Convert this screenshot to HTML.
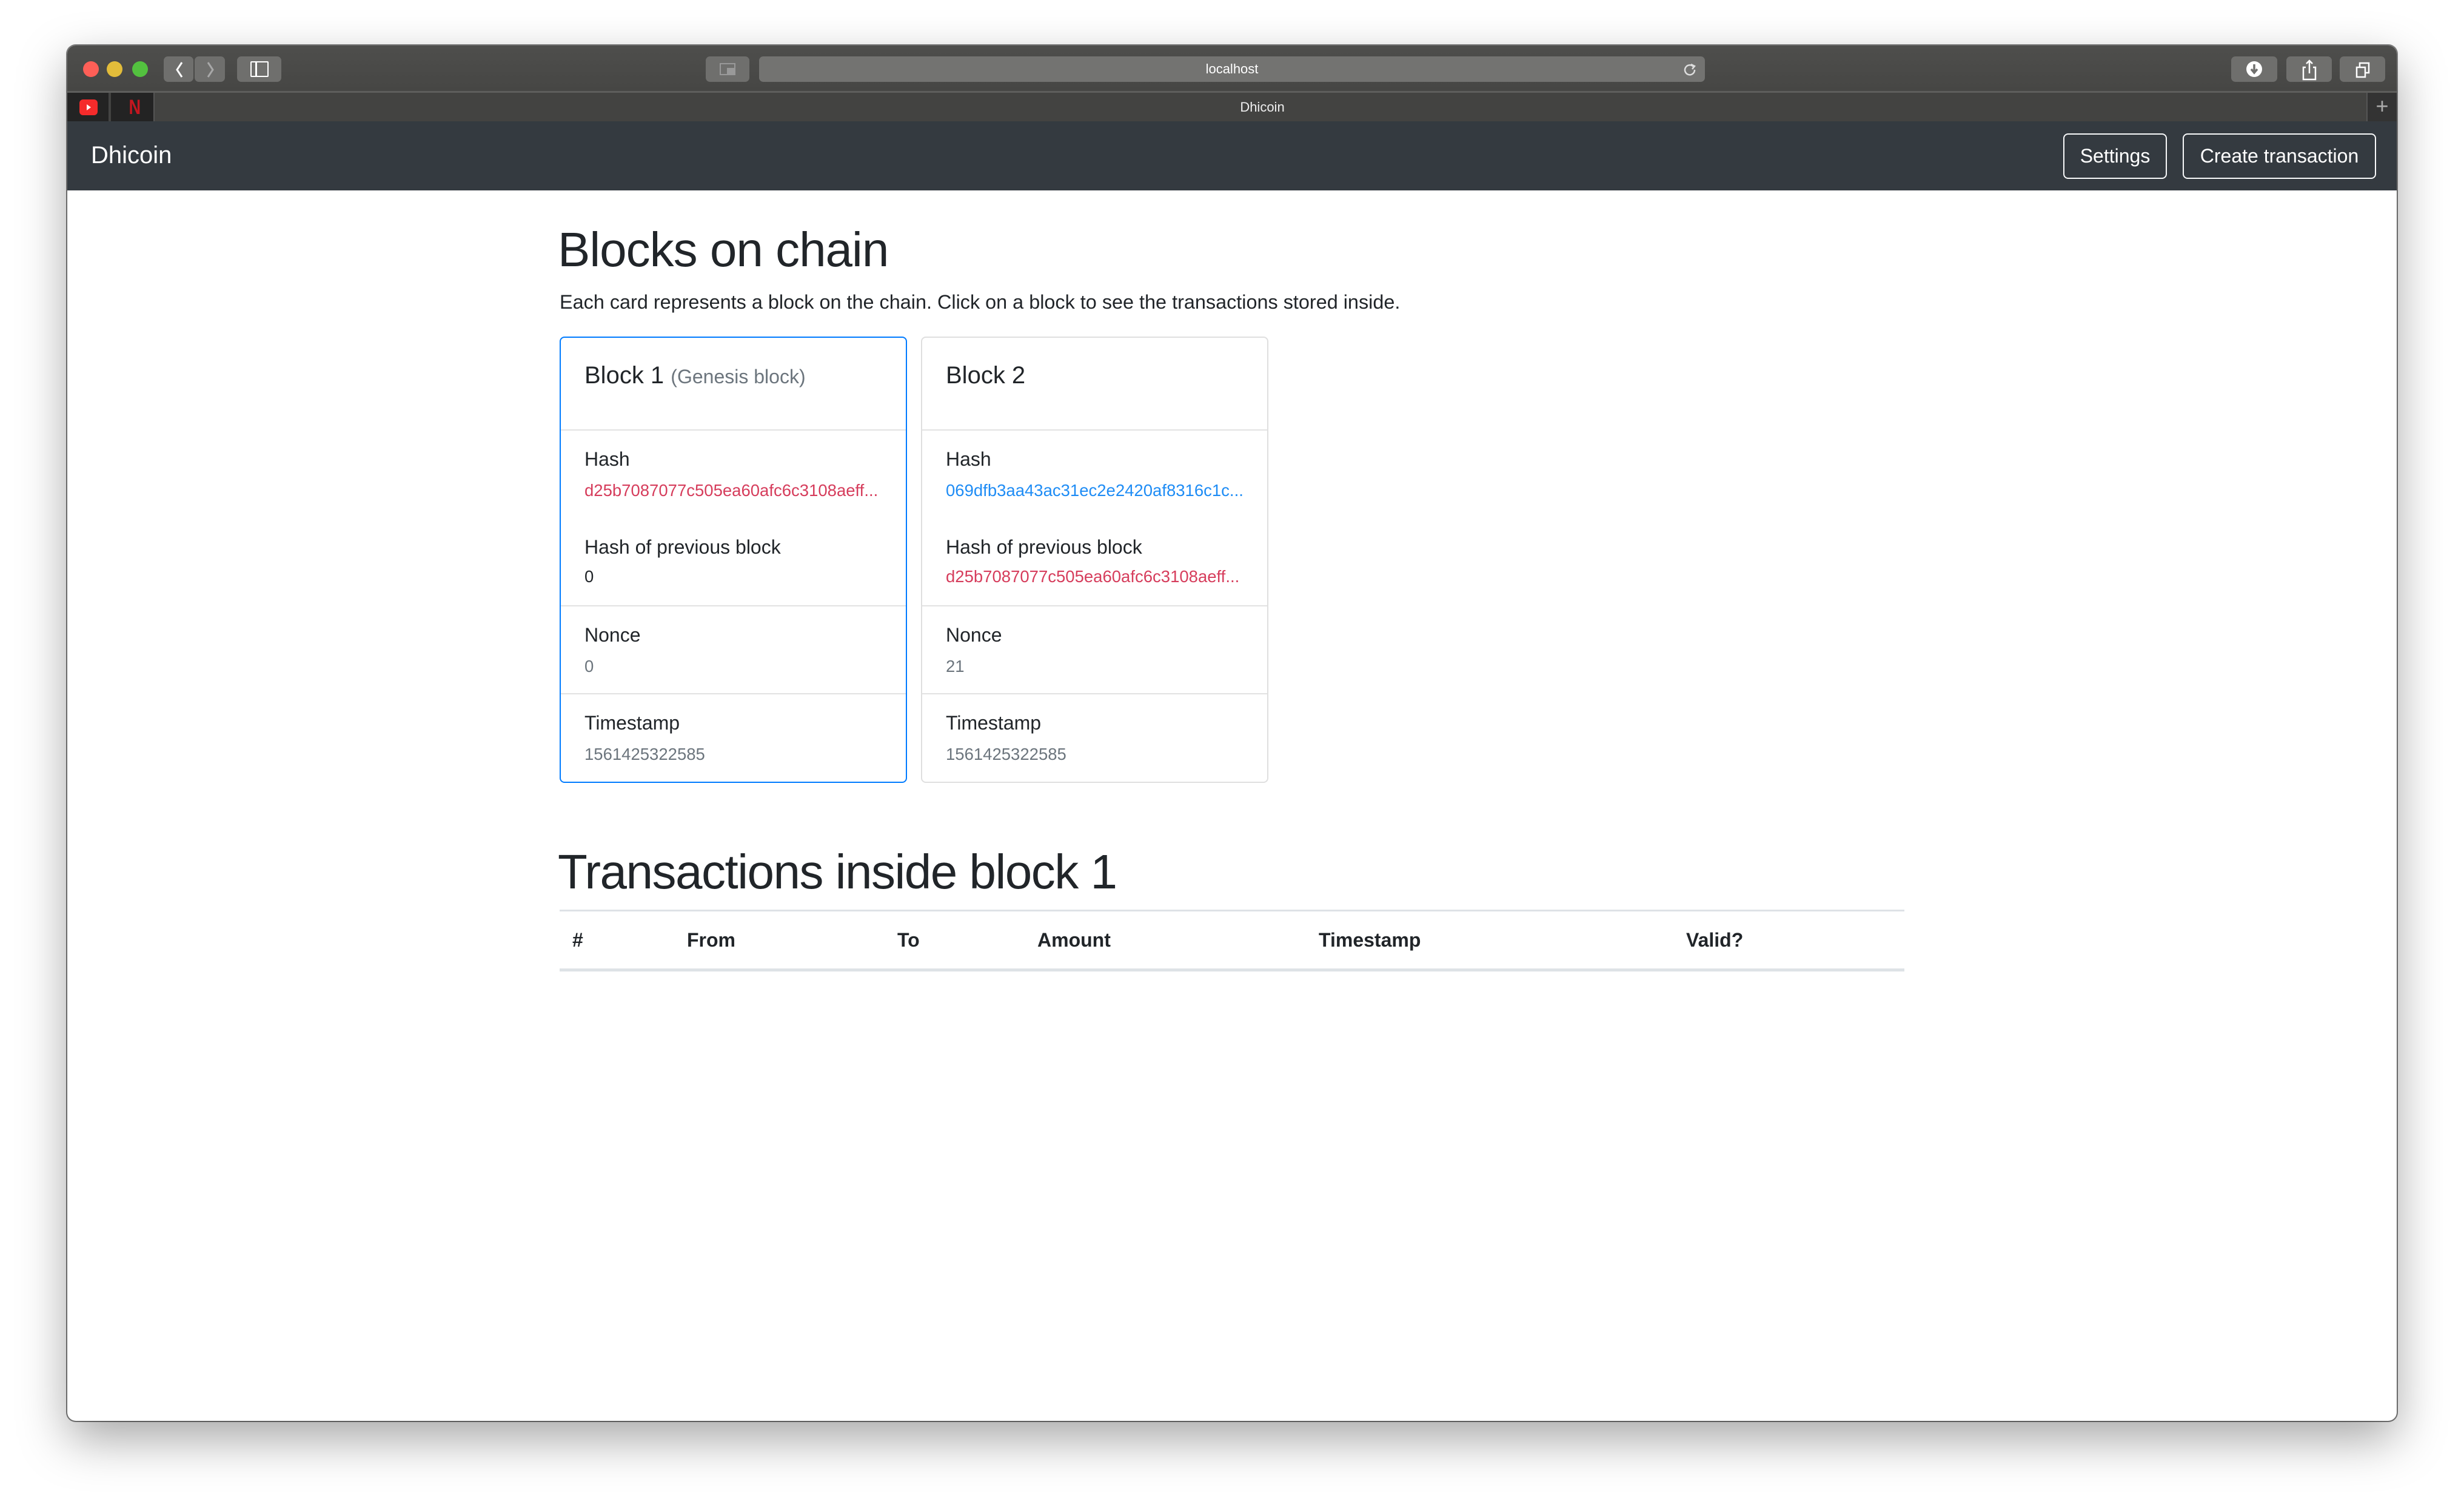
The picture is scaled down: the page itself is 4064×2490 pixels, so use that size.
<!DOCTYPE html>
<html><head><meta charset="utf-8"><style>
*{margin:0;padding:0;box-sizing:border-box}
html,body{width:4064px;height:2490px;overflow:hidden;background:#fff;font-family:"Liberation Sans",sans-serif;color:#212529}
.a{position:absolute}
.win{position:absolute;left:111px;top:75px;width:3842px;height:2268px;border-radius:14px;overflow:hidden;box-shadow:0 30px 80px rgba(0,0,0,.35),0 0 0 2px rgba(0,0,0,.5)}
.tb{position:absolute;left:0;top:0;width:100%;height:75px;background:linear-gradient(#4e4e4c,#464644)}
.tabs{position:absolute;left:0;top:75px;width:100%;height:125px;}
.btn{position:absolute;top:18px;height:42px;background:#6f6f6d;border-radius:7px}
.dot{position:absolute;top:18px;width:26px;height:26px;border-radius:50%}
.nav{position:absolute;left:0;top:125px;width:100%;height:114px;background:#343a40}
.nb{position:absolute;top:20px;height:75px;border:2px solid #f8f9fa;border-radius:8px;color:#fff;font-size:32px;line-height:71px;text-align:center}
.card{position:absolute;top:555px;width:573px;height:736px;border:2px solid #dfdfdf;border-radius:8px}
.t{position:absolute;left:39px;white-space:nowrap}
.lbl{font-size:32px;line-height:40px}
.val{font-size:27.5px;line-height:32px;color:#6c757d}
.hr{position:absolute;left:0;width:100%;height:2px;background:#e2e2e2}
.th{position:absolute;top:1530px;font-size:32px;font-weight:bold;line-height:40px}
</style></head><body>
<div class="win">
 <div class="tb">
  <div class="dot" style="left:26px;top:26px;background:#fe5f57"></div>
  <div class="dot" style="left:65px;top:26px;background:#e2bc3a"></div>
  <div class="dot" style="left:107px;top:26px;background:#53c13f"></div>
  <div class="btn" style="left:159px;width:49px"></div>
  <div class="btn" style="left:210px;width:50px"></div>
  <svg class="a" style="left:175px;top:26px" width="20" height="28"><path d="M14 2 L6 14 L14 26" stroke="#fff" stroke-width="3" fill="none"/></svg>
  <svg class="a" style="left:226px;top:26px" width="20" height="28"><path d="M6 2 L14 14 L6 26" stroke="#a8a8a8" stroke-width="3" fill="none"/></svg>
  <div class="btn" style="left:280px;width:73px"></div>
  <div class="a" style="left:302px;top:26px;width:30px;height:26px;border:2.5px solid #fff;border-radius:2px"><div class="a" style="left:6px;top:0;width:2.5px;height:22px;background:#fff"></div></div>
  <div class="btn" style="left:1053px;width:72px"></div>
  <div class="a" style="left:1076px;top:29px;width:26px;height:20px;border:2px solid #999"><div class="a" style="right:-2px;bottom:-2px;width:14px;height:12px;background:#999"></div></div>
  <div class="btn" style="left:1141px;width:1560px;background:#737371"></div>
  <div class="a" style="left:1141px;top:18px;width:1560px;line-height:42px;text-align:center;color:#fff;font-size:22px">localhost</div>
  <svg class="a" style="left:2664px;top:27px" width="24" height="24"><path d="M18 8 A8 8 0 1 0 20 13" stroke="#ddd" stroke-width="2.5" fill="none"/><path d="M14 4 L20 7 L16 12" stroke="#ddd" stroke-width="2.5" fill="none"/></svg>
  <div class="btn" style="left:3569px;width:76px"></div>
  <div class="a" style="left:3594px;top:26px;width:26px;height:26px;border-radius:50%;background:#fff"></div>
  <svg class="a" style="left:3594px;top:26px" width="26" height="26"><path d="M13 5 V18 M8 13 L13 19 L18 13" stroke="#6f6f6d" stroke-width="3.5" fill="none"/></svg>
  <div class="btn" style="left:3660px;width:75px"></div>
  <svg class="a" style="left:3685px;top:22px" width="26" height="36"><path d="M7 14 H3 V34 H23 V14 H19 M13 24 V3 M8 8 L13 3 L18 8" stroke="#fff" stroke-width="2.5" fill="none"/></svg>
  <div class="btn" style="left:3748px;width:75px"></div>
  <svg class="a" style="left:3773px;top:26px" width="26" height="28"><path d="M3 10 H17 V26 H3 Z M8 10 V3 H23 V19 H17" stroke="#fff" stroke-width="2.5" fill="none"/></svg>
 </div>
 <div class="tabs">
  <div class="a" style="left:0;top:0;width:100%;height:3px;background:#5e5e5c"></div>
  <div class="a" style="left:0;top:3px;width:100%;height:47px;background:#434341"></div>
  <div class="a" style="left:0;top:3px;width:70px;height:47px;background:#232323;border-right:2px solid #444"></div>
  <div class="a" style="left:20px;top:14px;width:30px;height:26px;border-radius:6px;background:#f52b2b"></div>
  <div class="a" style="left:32px;top:22px;width:0;height:0;border-left:7px solid #fff;border-top:5px solid transparent;border-bottom:5px solid transparent"></div>
  <div class="a" style="left:72px;top:3px;width:72px;height:47px;background:#232323;border-right:2px solid #555"></div>
  <div class="a" style="left:99px;top:8px;color:#c5161f;font-weight:bold;font-size:34px;line-height:38px;transform:scaleX(.8)">N</div>
  <div class="a" style="left:0;top:3px;width:100%;line-height:47px;text-align:center;color:#eee;font-size:22px;padding-left:100px">Dhicoin</div>
  <div class="a" style="left:3792px;top:3px;width:50px;height:47px;background:#333;border-left:2px solid #555;color:#aaa;font-size:36px;line-height:44px;text-align:center">+</div>
  <div class="a" style="left:0;top:50px;width:100%;height:2px;background:#111"></div>
 </div>
 <div class="nav">
  <div class="a" style="left:39px;top:30px;color:#fff;font-size:40px;line-height:52px">Dhicoin</div>
  <div class="nb" style="left:3292px;width:171px">Settings</div>
  <div class="nb" style="left:3489px;width:319px">Create transaction</div>
 </div>
</div>

<div class="a" style="left:920px;top:364px;font-size:80px;line-height:96px;font-weight:500;letter-spacing:-1px">Blocks on chain</div>
<div class="a" style="left:923px;top:478px;font-size:32.4px;line-height:40px">Each card represents a block on the chain. Click on a block to see the transactions stored inside.</div>

<div class="card" style="left:923px;border-color:#007bff">
 <div class="t" style="top:34px;font-size:40px;line-height:56px">Block 1 <span style="font-size:32px;color:#6c757d">(Genesis block)</span></div>
 <div class="hr" style="top:151px"></div>
 <div class="t lbl" style="top:180px">Hash</div>
 <div class="t val" style="top:236px;color:#d63d5c">d25b7087077c505ea60afc6c3108aeff...</div>
 <div class="t lbl" style="top:325px">Hash of previous block</div>
 <div class="t val" style="top:378px;color:#212529">0</div>
 <div class="hr" style="top:441px"></div>
 <div class="t lbl" style="top:470px">Nonce</div>
 <div class="t val" style="top:526px">0</div>
 <div class="hr" style="top:586px"></div>
 <div class="t lbl" style="top:615px">Timestamp</div>
 <div class="t val" style="top:671px">1561425322585</div>
</div>

<div class="card" style="left:1519px">
 <div class="t" style="top:34px;font-size:40px;line-height:56px">Block 2</div>
 <div class="hr" style="top:151px"></div>
 <div class="t lbl" style="top:180px">Hash</div>
 <div class="t val" style="top:236px;color:#1e8cf5">069dfb3aa43ac31ec2e2420af8316c1c...</div>
 <div class="t lbl" style="top:325px">Hash of previous block</div>
 <div class="t val" style="top:378px;color:#d63d5c">d25b7087077c505ea60afc6c3108aeff...</div>
 <div class="hr" style="top:441px"></div>
 <div class="t lbl" style="top:470px">Nonce</div>
 <div class="t val" style="top:526px">21</div>
 <div class="hr" style="top:586px"></div>
 <div class="t lbl" style="top:615px">Timestamp</div>
 <div class="t val" style="top:671px">1561425322585</div>
</div>

<div class="a" style="left:920px;top:1390px;font-size:80px;line-height:96px;font-weight:500;letter-spacing:-1.5px">Transactions inside block 1</div>
<div class="a" style="left:923px;top:1500px;width:2218px;height:3px;background:#dee2e6"></div>
<div class="th" style="left:944px">#</div>
<div class="th" style="left:1133px">From</div>
<div class="th" style="left:1480px">To</div>
<div class="th" style="left:1711px">Amount</div>
<div class="th" style="left:2175px">Timestamp</div>
<div class="th" style="left:2781px">Valid?</div>
<div class="a" style="left:923px;top:1597px;width:2218px;height:5px;background:#dee2e6"></div>
</body></html>
